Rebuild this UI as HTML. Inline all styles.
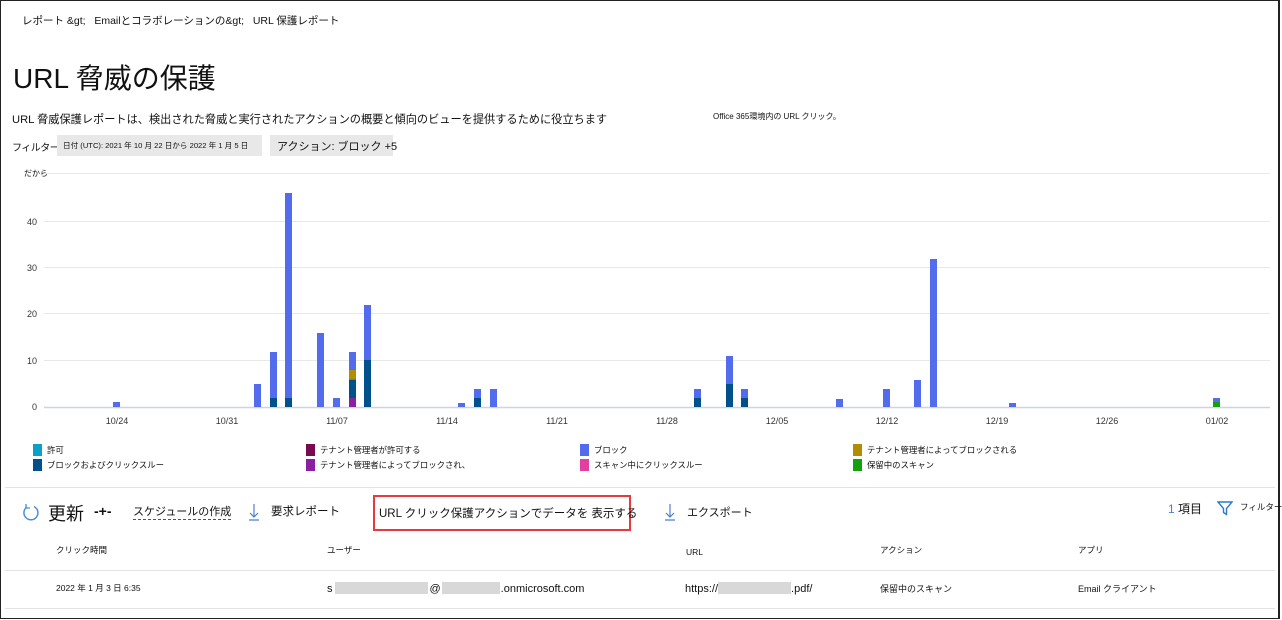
<!DOCTYPE html>
<html><head><meta charset="utf-8"><style>
*{margin:0;padding:0;box-sizing:border-box}
body{width:1282px;height:620px;background:#fff;font-family:"Liberation Sans","Noto Sans CJK JP",sans-serif;color:#111;position:relative;overflow:hidden}
.a{position:absolute;white-space:nowrap}
.frame{position:absolute;left:0;top:0;width:1280px;height:619px;border:1px solid #222;border-right:2px solid #222}
.lg{position:absolute;font-size:8.4px;white-space:nowrap}
.lg i{display:inline-block;width:9px;height:12px;vertical-align:-3px;margin-right:5px}
.hr{position:absolute;height:1px;background:#e3e3e3}
</style></head><body>
<div class="frame"></div>
<div class="a" style="left:22px;top:13px;font-size:10.5px">レポート &amp;gt;&nbsp;&nbsp; Emailとコラボレーションの&amp;gt;&nbsp;&nbsp; URL 保護レポート</div>
<div class="a" style="left:13px;top:57px;font-size:28px">URL 脅威の保護</div>
<div class="a" style="left:12px;top:111px;font-size:11.2px">URL 脅威保護レポートは、検出された脅威と実行されたアクションの概要と傾向のビューを提供するために役立ちます</div>
<div class="a" style="left:713px;top:111px;font-size:8px">Office 365環境内の URL クリック。</div>
<div class="a" style="left:12px;top:139px;font-size:10px;letter-spacing:-0.5px">フィルター:</div>
<div class="a" style="left:57px;top:135px;width:205px;height:21px;background:#e8e8e8;font-size:7.6px;padding:5px 0 0 6px">日付 (UTC): 2021 年 10 月 22 日から 2022 年 1 月 5 日</div>
<div class="a" style="left:270px;top:135px;width:123px;height:21px;background:#e8e8e8;font-size:11px;padding:3px 0 0 7px">アクション: ブロック +5</div>
<div class="a" style="left:24px;top:168px;font-size:8px">だから</div>
<svg class="a" style="left:0;top:0" width="1282" height="440">
<g stroke="#e8e8e8" stroke-width="1">
<line x1="44" y1="173.5" x2="1270" y2="173.5"/><line x1="44" y1="221.5" x2="1270" y2="221.5"/><line x1="44" y1="267.5" x2="1270" y2="267.5"/><line x1="44" y1="313.5" x2="1270" y2="313.5"/><line x1="44" y1="360.5" x2="1270" y2="360.5"/>
</g>
<line x1="44" y1="407.5" x2="1270" y2="407.5" stroke="#cfd3e0" stroke-width="1.5"/>
<g font-size="9" fill="#333" font-family="Liberation Sans,sans-serif" text-anchor="end">
<text x="37" y="225">40</text><text x="37" y="271">30</text><text x="37" y="317">20</text><text x="37" y="364">10</text><text x="37" y="410">0</text>
</g>
<g font-size="9" fill="#333" font-family="Liberation Sans,sans-serif" text-anchor="middle">
<text x="117" y="424">10/24</text><text x="227" y="424">10/31</text><text x="337" y="424">11/07</text><text x="447" y="424">11/14</text><text x="557" y="424">11/21</text><text x="667" y="424">11/28</text><text x="777" y="424">12/05</text><text x="887" y="424">12/12</text><text x="997" y="424">12/19</text><text x="1107" y="424">12/26</text><text x="1217" y="424">01/02</text>
</g>
<g fill="#536bed">
<rect x="113" y="402" width="7" height="5"/>
<rect x="254" y="384" width="7" height="23"/>
<rect x="270" y="352" width="7" height="55"/>
<rect x="285" y="193" width="7" height="214"/>
<rect x="317" y="333" width="7" height="74"/>
<rect x="333" y="398" width="7" height="9"/>
<rect x="349" y="352" width="7" height="55"/>
<rect x="364" y="305" width="7" height="102"/>
<rect x="458" y="403" width="7" height="4"/>
<rect x="474" y="389" width="7" height="18"/>
<rect x="490" y="389" width="7" height="18"/>
<rect x="694" y="389" width="7" height="18"/>
<rect x="726" y="356" width="7" height="51"/>
<rect x="741" y="389" width="7" height="18"/>
<rect x="836" y="399" width="7" height="8"/>
<rect x="883" y="389" width="7" height="18"/>
<rect x="914" y="380" width="7" height="27"/>
<rect x="930" y="259" width="7" height="148"/>
<rect x="1009" y="403" width="7" height="4"/>
<rect x="1213" y="398" width="7" height="9"/>
</g>
<g fill="#00508c">
<rect x="270" y="398" width="7" height="9"/><rect x="285" y="398" width="7" height="9"/>
<rect x="349" y="380" width="7" height="18"/>
<rect x="364" y="360" width="7" height="47"/>
<rect x="474" y="398" width="7" height="9"/>
<rect x="694" y="398" width="7" height="9"/>
<rect x="726" y="384" width="7" height="23"/>
<rect x="741" y="398" width="7" height="9"/>
</g>
<rect x="349" y="398" width="7" height="9" fill="#8a1fa0"/>
<rect x="349" y="370" width="7" height="9" fill="#b48c00"/>
<rect x="1213" y="402" width="7" height="5" fill="#13a10e"/>
</svg>
<div class="lg" style="left:33px;top:444px"><i style="background:#0aa0c8"></i>許可</div>
<div class="lg" style="left:33px;top:459px"><i style="background:#00508c"></i>ブロックおよびクリックスルー</div>
<div class="lg" style="left:306px;top:444px"><i style="background:#7a0a50"></i>テナント管理者が許可する</div>
<div class="lg" style="left:306px;top:459px"><i style="background:#8a1fa0"></i>テナント管理者によってブロックされ、</div>
<div class="lg" style="left:580px;top:444px"><i style="background:#536bed"></i>ブロック</div>
<div class="lg" style="left:580px;top:459px"><i style="background:#e040a0"></i>スキャン中にクリックスルー</div>
<div class="lg" style="left:853px;top:444px"><i style="background:#b48c00"></i>テナント管理者によってブロックされる</div>
<div class="lg" style="left:853px;top:459px"><i style="background:#13a10e"></i>保留中のスキャン</div>
<div class="hr" style="left:5px;top:487px;width:1270px"></div>
<svg class="a" style="left:22px;top:503px" width="18" height="18"><path d="M12 3.5A7 7 0 1 1 5 4" fill="none" stroke="#4a90d8" stroke-width="1.5"/><path d="M4 1v4h4" fill="none" stroke="#4a90d8" stroke-width="1.3"/></svg>
<div class="a" style="left:48px;top:500px;font-size:18px">更新</div>
<div class="a" style="left:94px;top:503px;font-size:14px;font-weight:bold">-+-</div>
<div class="a" style="left:133px;top:503px;font-size:11px;border-bottom:1px dashed #555">スケジュールの作成</div>
<svg class="a" style="left:248px;top:503px" width="12" height="18"><path d="M6 1v13M2 10l4 4 4-4M1 17h10" fill="none" stroke="#4a7fd0" stroke-width="1.2"/></svg>
<div class="a" style="left:271px;top:503px;font-size:11.5px">要求レポート</div>
<div class="a" style="left:373px;top:495px;width:258px;height:36px;border:2px solid #e8393c"></div>
<div class="a" style="left:379px;top:505px;font-size:11.5px">URL クリック保護アクションでデータを 表示する</div>
<svg class="a" style="left:664px;top:503px" width="12" height="18"><path d="M6 1v13M2 10l4 4 4-4M1 17h10" fill="none" stroke="#4a7fd0" stroke-width="1.2"/></svg>
<div class="a" style="left:687px;top:504px;font-size:11px">エクスポート</div>
<div class="a" style="left:1168px;top:500px;font-size:12px"><span style="color:#4a7fd0">1</span> 項目</div>
<svg class="a" style="left:1217px;top:501px" width="16" height="15"><path d="M1 1h14l-5.5 6.5v6l-3-2v-4z" fill="none" stroke="#2a7ad0" stroke-width="1.4"/></svg>
<div class="a" style="left:1240px;top:501px;font-size:8.5px">フィルター</div>
<div class="a" style="left:56px;top:544px;font-size:8.5px">クリック時間</div>
<div class="a" style="left:327px;top:544px;font-size:8.5px">ユーザー</div>
<div class="a" style="left:686px;top:547px;font-size:8.5px">URL</div>
<div class="a" style="left:880px;top:544px;font-size:8.5px">アクション</div>
<div class="a" style="left:1078px;top:544px;font-size:8.5px">アプリ</div>
<div class="hr" style="left:5px;top:570px;width:1270px"></div>
<div class="a" style="left:56px;top:582px;font-size:8.5px">2022 年 1 月 3 日 6:35</div>
<div class="a" style="left:327px;top:582px;font-size:11px">s<span style="display:inline-block;width:93px;height:12px;background:#d8d8d8;vertical-align:-2px;margin:0 2px"></span>@<span style="display:inline-block;width:58px;height:12px;background:#d8d8d8;vertical-align:-2px;margin:0 1px"></span>.onmicrosoft.com</div>
<div class="a" style="left:685px;top:582px;font-size:11px">https://<span style="display:inline-block;width:73px;height:12px;background:#d8d8d8;vertical-align:-2px"></span>.pdf/</div>
<div class="a" style="left:880px;top:582px;font-size:9px">保留中のスキャン</div>
<div class="a" style="left:1078px;top:582px;font-size:9px">Email クライアント</div>
<div class="hr" style="left:5px;top:608px;width:1270px"></div>
</body></html>
